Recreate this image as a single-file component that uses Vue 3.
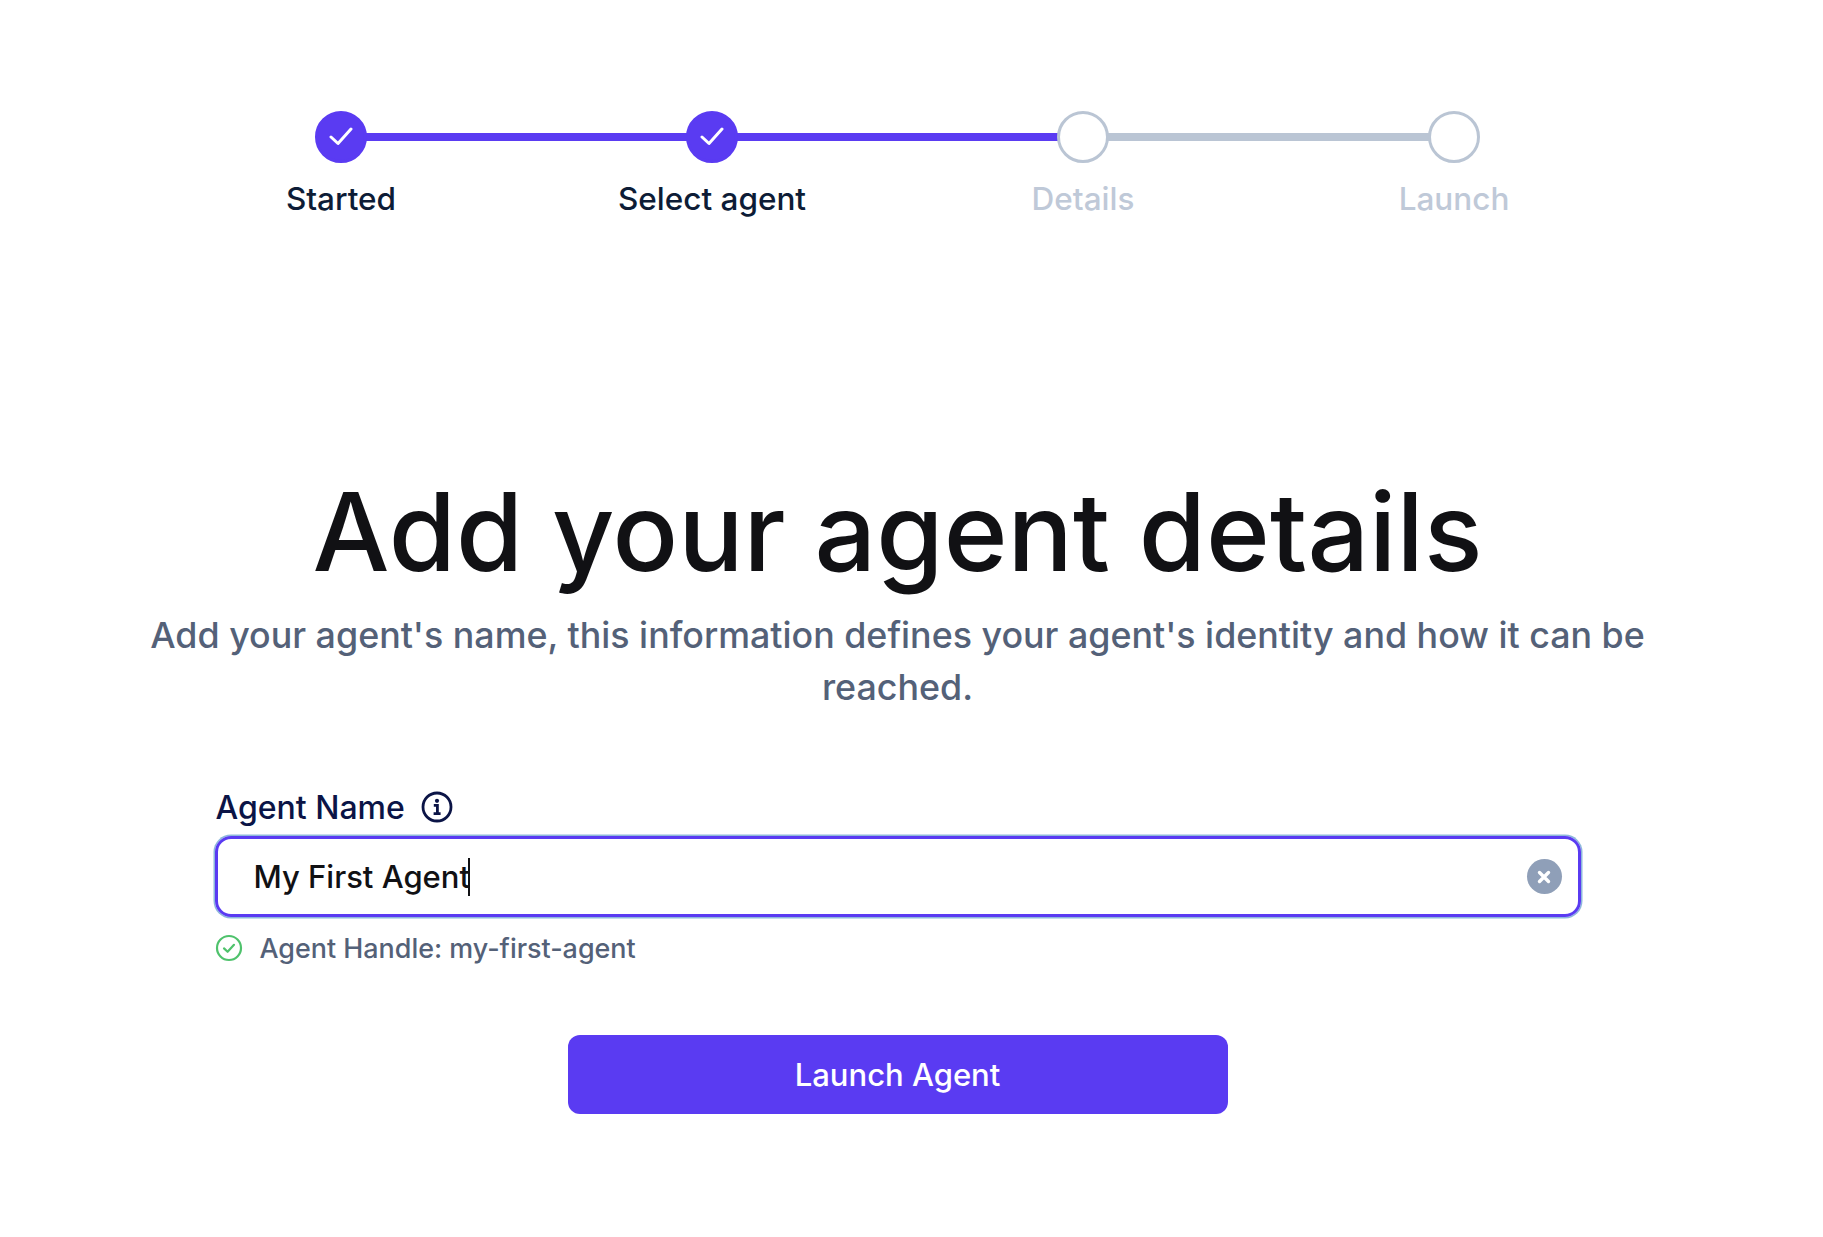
<script setup>
import { ref } from 'vue';

const steps = [
  { label: 'Started', state: 'done' },
  { label: 'Select agent', state: 'done' },
  { label: 'Details', state: 'todo' },
  { label: 'Launch', state: 'todo', last: true },
];
const agentName = ref('My First Agent');
const clearName = () => {
  agentName.value = '';
};
</script>

<template>
  <main class="page">
    <ol class="stepper">
      <li v-for="step in steps" :key="step.label" class="step" :class="[step.state, { last: step.last }]">
        <span class="dot">
          <svg v-if="step.state === 'done'" width="24" height="24" viewBox="0 0 24 24" fill="none">
            <path d="M2 12 L9 18.5 L22 4" stroke="#fff" stroke-width="3" stroke-linecap="round" stroke-linejoin="round" />
          </svg>
        </span>
        <span class="step-label">{{ step.label }}</span>
      </li>
    </ol>

    <h1 class="title">Add your agent details</h1>
    <p class="subtitle">Add your agent's name, this information defines your agent's identity and how it can be reached.</p>

    <form class="form" @submit.prevent>
      <div class="label-row">
        <label class="label">Agent Name</label>
        <svg class="info" width="32" height="32" viewBox="0 0 32 32" fill="none">
          <circle cx="16" cy="16" r="14" stroke="#0b1446" stroke-width="2.8" />
          <circle cx="16" cy="9.8" r="2.1" fill="#0b1446" />
          <path d="M12.8 14.4 H16.4 V22.4 M12.6 22.6 H19.6" stroke="#0b1446" stroke-width="2.8" />
        </svg>
      </div>
      <div class="field">
        <span class="value">{{ agentName }}</span><span class="caret"></span>
        <button type="button" class="clear" aria-label="Clear" @click="clearName">
          <svg width="14" height="14" viewBox="0 0 14 14" fill="none">
            <path d="M2.5 2.5 L11.5 11.5 M11.5 2.5 L2.5 11.5" stroke="#fff" stroke-width="3.4" stroke-linecap="round" />
          </svg>
        </button>
      </div>
      <div class="handle">
        <svg width="28" height="28" viewBox="0 0 28 28" fill="none">
          <circle cx="14" cy="14" r="12" stroke="#4fc26c" stroke-width="2.2" />
          <path d="M9 14.4 L12.6 17.8 L19 10.8" stroke="#4fc26c" stroke-width="2.2" stroke-linecap="round" stroke-linejoin="round" />
        </svg>
        <span>Agent Handle: my-first-agent</span>
      </div>
      <button type="submit" class="launch">Launch Agent</button>
    </form>
  </main>
</template>

<style scoped>
.page {
  box-sizing: border-box;
  width: 1795px;
  padding-top: 111px;
  display: flex;
  flex-direction: column;
  align-items: center;
  font-family: Inter, "Noto Sans", sans-serif;
}

.stepper {
  list-style: none;
  margin: 0;
  padding: 0;
  display: grid;
  grid-template-columns: repeat(4, 371px);
}

.step {
  position: relative;
  display: flex;
  flex-direction: column;
  align-items: center;
  gap: 18px;
}

.step::after {
  content: '';
  position: absolute;
  top: 22px;
  left: 50%;
  width: 100%;
  height: 8px;
  background: #bac5d4;
}

.step.done::after {
  background: #5a3bf2;
}

.step.last::after {
  display: none;
}

.dot {
  position: relative;
  z-index: 1;
  box-sizing: border-box;
  width: 52px;
  height: 52px;
  border-radius: 50%;
  display: flex;
  align-items: center;
  justify-content: center;
  background: #fff;
  border: 3px solid #bac5d4;
}

.done .dot {
  background: #5a3bf2;
  border-color: #5a3bf2;
}

.step-label {
  font-size: 31.5px;
  line-height: 36px;
  font-weight: 500;
  color: #0d1c36;
}

.todo .step-label {
  color: #bfc9d8;
}

.title {
  margin: 250px 0 0;
  font-size: 108.7px;
  line-height: 130px;
  font-weight: 500;
  color: #111114;
  white-space: nowrap;
}

.subtitle {
  width: 1540px;
  margin: 12px 0 0;
  font-size: 35.8px;
  line-height: 52px;
  font-weight: 450;
  text-align: center;
  color: #546178;
}

.form {
  width: 1366px;
  margin-top: 76px;
  display: flex;
  flex-direction: column;
}

.label-row {
  display: flex;
  align-items: center;
  gap: 16px;
  height: 36px;
  padding-left: 1px;
}

.label {
  font-size: 32px;
  font-weight: 500;
  color: #0b1446;
}

.field {
  position: relative;
  box-sizing: border-box;
  height: 81px;
  margin-top: 11px;
  padding: 0 36px;
  display: flex;
  align-items: center;
  border: 3px solid #5a3bf2;
  border-radius: 16px;
  box-shadow: 0 0 0 1.5px #8db8dc;
  font-size: 31px;
  color: #111114;
}

.value {
  font-weight: 500;
}

.caret {
  width: 2px;
  height: 38px;
  margin-left: -2px;
  background: #111114;
}

.clear {
  position: absolute;
  right: 16px;
  top: 20px;
  width: 35px;
  height: 35px;
  padding: 0;
  border: 0;
  border-radius: 50%;
  background: #8f9fb8;
  display: flex;
  align-items: center;
  justify-content: center;
}

.handle {
  margin-top: 14px;
  display: flex;
  align-items: center;
  gap: 17px;
  font-size: 26.9px;
  line-height: 34px;
  font-weight: 450;
  color: #546178;
}

.launch {
  align-self: center;
  width: 660px;
  height: 79px;
  margin-top: 70px;
  border: 0;
  border-radius: 12px;
  background: #5a3bf2;
  color: #fff;
  font-family: inherit;
  font-size: 31px;
  font-weight: 500;
}
</style>
